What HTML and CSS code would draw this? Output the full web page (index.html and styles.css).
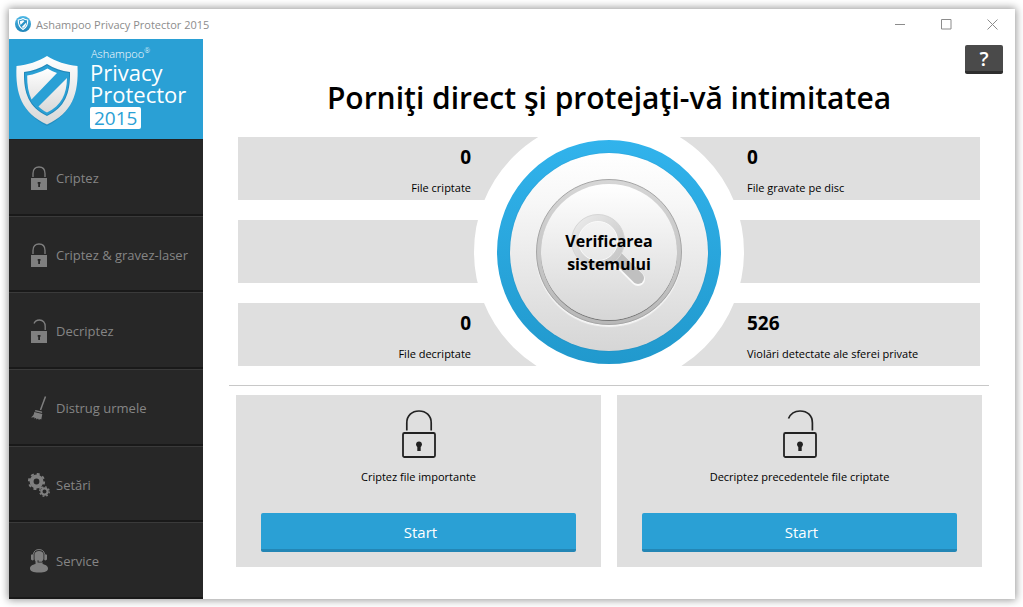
FILE: index.html
```html
<!DOCTYPE html>
<html lang="ro">
<head>
<meta charset="utf-8">
<title>Ashampoo Privacy Protector 2015</title>
<link rel="stylesheet" href="styles.css">
</head>
<body>
<svg class="defs" aria-hidden="true">
  <defs>
    <linearGradient id="silver" x1="0" y1="0" x2="0" y2="1"><stop offset="0" stop-color="#fff"/><stop offset="1" stop-color="#d8d8d8"/></linearGradient>
    <linearGradient id="sky" x1="0" y1="0" x2="0" y2="1"><stop offset="0" stop-color="#4fb8e6"/><stop offset="1" stop-color="#1d84b8"/></linearGradient>
    <linearGradient id="lens" x1="0" y1="0" x2="1" y2="1"><stop offset="0" stop-color="#ebebeb"/><stop offset="1" stop-color="#c4c4c4"/></linearGradient>
    <symbol id="lock-solid" viewBox="0 0 16 24"><path d="M2 11V7.500C2 3 4.500 1 8 1s6 2 6 6.500V11" fill="none" stroke="currentColor" stroke-width="1.300"/><path fill="currentColor" fill-rule="evenodd" d="M0 12h16v12H0zM6.700 16v1.800h.5V21h1.800v-3.200h.5V16z"/></symbol>
    <symbol id="unlock-solid" viewBox="0 0 16 24"><path d="M3 4.500C4 2 6 1 8.500 1c3.500 0 5.700 2.500 5.700 6.500V11" fill="none" stroke="currentColor" stroke-width="1.300"/><path fill="currentColor" fill-rule="evenodd" d="M0 12h16v12H0zM6.700 16v1.800h.5V21h1.800v-3.200h.5V16z"/></symbol>
    <symbol id="lock-body" viewBox="0 0 34 48"><rect x="1" y="23" width="32" height="24" rx="1.500" fill="none" stroke="currentColor" stroke-width="1.800"/><circle cx="17" cy="34.300" r="2.900" fill="currentColor"/><path d="M15.300 35h3.400v6h-3.400z" fill="currentColor"/></symbol>
  </defs>
</svg>
<div class="window">
  <header class="titlebar">
    <svg class="app-icon" viewBox="0 0 16 16" aria-hidden="true"><circle cx="8" cy="8" r="8" fill="url(#sky)"/><path d="M8 2.500c1.500 1 3 1.400 4.700 1.500.2 4.500-1.200 7.500-4.700 9.500C4.500 11.500 3.100 8.500 3.300 4 5 3.900 6.500 3.500 8 2.500z" fill="#2a93c6" stroke="#fff" stroke-width="1.100"/><path d="M4.800 5.300L8 4.300l1.500.7-4 4zM11.200 6.500c0 2.500-1 4.300-3.200 5.500l-1.200-.9z" fill="#fff"/></svg>
    <span class="title">Ashampoo Privacy Protector 2015</span>
    <button class="win-btn" aria-label="Minimizare"><svg viewBox="0 0 11 11"><path d="M0 5.500h10"/></svg></button>
    <button class="win-btn" aria-label="Maximizare"><svg viewBox="0 0 11 11"><path d="M.5.5h9.500v9.500H.5z"/></svg></button>
    <button class="win-btn" aria-label="Închidere"><svg viewBox="0 0 11 11"><path d="M.5.5l10 10M10.500.5l-10 10"/></svg></button>
  </header>
  <div class="content">
    <aside class="sidebar">
      <div class="logo">
        <svg class="shield" viewBox="0 0 64 70" aria-hidden="true"><path d="M32 2C23 7.500 14 10.500 3 11.500 1 39 8 58 32 70 56 58 63 39 61 11.500 50 10.500 41 7.500 32 2z" fill="#1c7fb0" opacity=".55"/><path d="M32 0C23 5.500 13 9 1.500 10 .2 38 7 57 32 68.500 57 57 63.800 38 62.500 10 51 9 41 5.500 32 0z" fill="url(#silver)"/><path d="M32 8C25 12.500 17.500 15 9 16c-.5 21 5 35.500 23 44 18-8.500 23.500-23 23-44-8.500-1-16-3.500-23-8z" fill="#2289bb"/><path d="M32 9.300C25 13.700 18 16 10 17c-.5 20 5 33.500 22 42 17-8.500 22.500-22 22-42-8-1-15-3.300-22-7.700z" fill="#2aa0d5"/><path d="M32.500 12.500c3 1.700 6 3.300 9.500 4.500L16.500 43.500C13.500 37 12 29 12.200 19.500c7.300-1.200 13.800-3.500 20.300-7zM52 22c-.3 16.500-5.500 27.500-20 34.500-3.500-1.700-6-3.700-8.500-6z" fill="url(#silver)"/></svg>
        <div class="brand">
          <span class="brand-small">Ashampoo<sup>®</sup></span>
          <span class="brand-name">Privacy<br>Protector</span>
          <span class="brand-year">2015</span>
        </div>
      </div>
      <nav class="nav">
        <button class="nav-item"><span class="nav-icon"><svg width="16" height="24"><use href="#lock-solid"/></svg></span>Criptez</button>
        <button class="nav-item"><span class="nav-icon"><svg width="16" height="24"><use href="#lock-solid"/></svg></span>Criptez &amp; gravez-laser</button>
        <button class="nav-item"><span class="nav-icon"><svg width="16" height="24"><use href="#unlock-solid"/></svg></span>Decriptez</button>
        <button class="nav-item"><span class="nav-icon"><svg width="16" height="24" viewBox="0 0 16 24"><path d="M14.500.5L9.500 14" fill="none" stroke="currentColor" stroke-width="1.500"/><path d="M4.500 14l6.500 1.500.2 1.500-7.500-1.800zM3.300 16l8 2-1 5.500-1.300-.5-1 1-1-1.500-1.500 1-.5-1.500-2 .5.500-1.200L0 21.500C2 20 3 18.500 3.300 16z" fill="currentColor"/></svg></span>Distrug urmele</button>
        <button class="nav-item"><span class="nav-icon"><svg width="22" height="24" viewBox="0 0 22 24"><g fill="none" stroke="currentColor"><circle cx="8.500" cy="8.500" r="4.900" stroke-width="4"/><circle cx="8.500" cy="8.500" r="7.600" stroke-width="2" stroke-dasharray="3 2.970"/><circle cx="16.500" cy="18.500" r="3.100" stroke-width="2.200"/><circle cx="16.500" cy="18.500" r="4.700" stroke-width="1.400" stroke-dasharray="1.850 1.840"/></g></svg></span>Setări</button>
        <button class="nav-item"><span class="nav-icon"><svg width="18" height="24" viewBox="0 0 18 24"><path d="M3.500 5C4 1.800 6 .6 9 .6s5 1.200 5.500 4.400" fill="none" stroke="currentColor" stroke-width="1"/><path d="M4.500 5C5 3 6.500 2 9 2s4 1 4.500 3v5c-.4 1.200-1 2-1.700 2.700H8.500v-1.500h-.9v2.200h5.200l-.3 1.600c3 .7 5.500 2 5.500 4.500 0 2.700-3 4-9 4s-9-1.300-9-4c0-2.500 2.500-3.800 5.500-4.500v-2.500c-.5-.7-.8-1.500-1-2.500zM1 5.800L3.700 5v6L2.500 11.500 1 10.500zM17 5.800L14.300 5v6l1.200.5 1.500-1z" fill="currentColor"/></svg></span>Service</button>
      </nav>
    </aside>
    <main class="main">
      <div class="toolbar"><button class="help" aria-label="Ajutor">?</button></div>
      <h1>Porniţi direct şi protejaţi-vă intimitatea</h1>
      <section class="stats">
        <div class="row">
          <div class="stat left"><strong>0</strong><span>File criptate</span></div>
          <div class="stat"><strong>0</strong><span>File gravate pe disc</span></div>
        </div>
        <div class="row"></div>
        <div class="row">
          <div class="stat left"><strong>0</strong><span>File decriptate</span></div>
          <div class="stat"><strong>526</strong><span>Violări detectate ale sferei private</span></div>
        </div>
        <button class="scan">
          <span class="disc"><span class="groove"><span class="face">
            <svg class="magnifier" viewBox="0 0 76 76" aria-hidden="true"><path d="M46 45L67 66" stroke="#fafafa" stroke-width="14" stroke-linecap="round"/><path d="M46 44L67 65" stroke="#c0c0c0" stroke-width="12" stroke-linecap="round"/><circle cx="27" cy="28" r="23" fill="none" stroke="url(#lens)" stroke-width="7"/><circle cx="27" cy="28" r="26.500" fill="none" stroke="#d6d6d6"/><circle cx="27" cy="28" r="19.500" fill="none" stroke="#fafafa"/></svg>
            <span class="scan-label">Verificarea<br>sistemului</span>
          </span></span></span>
        </button>
      </section>
      <hr>
      <section class="cards">
        <article class="card">
          <svg class="card-icon" viewBox="0 0 34 48" aria-hidden="true"><use href="#lock-body"/><path d="M4.800 20.500V13C4.800 5.500 10 1 17 1s12.200 4.500 12.200 12v7.500" fill="none" stroke="currentColor" stroke-width="1.700"/></svg>
          <p>Criptez file importante</p>
          <button class="start">Start</button>
        </article>
        <article class="card">
          <svg class="card-icon" viewBox="0 0 34 48" aria-hidden="true"><use href="#lock-body"/><path d="M5.500 8.500C7.500 4 12 1 17 1c7.500 0 12.400 4.500 12.400 12v7.500" fill="none" stroke="currentColor" stroke-width="1.700"/></svg>
          <p>Decriptez precedentele file criptate</p>
          <button class="start">Start</button>
        </article>
      </section>
    </main>
  </div>
</div>
</body>
</html>
```
FILE: styles.css
```css
* { box-sizing: border-box; }
body {
  margin: 0;
  padding: 9px 8px 8px 9px;
  min-height: 100vh;
  display: flex;
  background: #fff;
  color: #000;
  font-family: "Open Sans", "Noto Sans", sans-serif;
  font-size: 11px;
  font-feature-settings: "locl" 0;
}
button { font: inherit; font-feature-settings: inherit; color: inherit; border: 0; padding: 0; background: none; cursor: pointer; }
.defs { position: absolute; width: 0; height: 0; }

.window {
  flex: 1;
  display: flex;
  flex-direction: column;
  background: #fff;
  box-shadow: 0 0 8px 1px rgba(0, 0, 0, .42);
}
.titlebar { display: flex; align-items: center; height: 30px; padding-left: 6px; color: #8c8c8c; }
.app-icon { width: 16px; height: 16px; margin-right: 5px; }
.title { flex: 1; }
.win-btn { width: 46px; height: 30px; display: grid; place-items: center; }
.win-btn svg { width: 11px; height: 11px; fill: none; stroke: #8c8c8c; stroke-width: 1; }

.content { flex: 1; display: flex; }
.sidebar { width: 194px; flex: none; display: flex; flex-direction: column; background: #272727; }
.logo { height: 100px; display: flex; gap: 11px; padding: 8px 6px; background: #2aa0d5; color: #fff; }
.shield { width: 64px; height: 70px; margin-top: 9px; }
.brand { display: flex; flex-direction: column; align-items: flex-start; }
.brand-small { font-size: 11px; font-weight: 300; line-height: 14px; padding-left: 1px; }
.brand-small sup { font-size: 7px; line-height: 0; }
.brand-name { font-size: 22px; line-height: 22px; }
.brand-year { margin-top: 2px; padding: 0 4px; border-radius: 2px; background: #fff; color: #2aa0d5; font-size: 19px; line-height: 22px; }

.nav { flex: 1; display: flex; flex-direction: column; }
.nav-item {
  flex: 1;
  display: flex;
  align-items: center;
  padding: 2px 0 0 17px;
  border-top: 1px solid #3a3a3a;
  border-bottom: 2px solid #191919;
  color: #858585;
  font-size: 13px;
  white-space: nowrap;
}
.nav-item:first-child { border-top-color: #222; }
.nav-icon { width: 26px; margin-right: 4px; display: grid; place-items: center; color: #7f7f7f; }

.main { flex: 1; padding: 6px 12px 0; display: flex; flex-direction: column; }
.toolbar { display: flex; justify-content: flex-end; }
.help { width: 38px; height: 29px; padding-top: 2px; border-radius: 2px; border-bottom: 3px solid #2e2e2e; background: #4a4a4a; color: #fff; font-size: 20px; font-weight: 600; line-height: 24px; }
h1 { margin: 2px 0 17px; text-align: center; font-size: 30px; font-weight: 600; line-height: 44px; }

.stats { position: relative; overflow: hidden; display: grid; gap: 20px; margin: 0 23px; }
.row { display: grid; grid-template-columns: 1fr 1fr; height: 63px; background: #dfdfdf; }
.stat { display: flex; flex-direction: column; gap: 11px; padding: 8px 0 0 138px; line-height: 16px; }
.stat.left { padding: 8px 138px 0 0; text-align: right; }
.stat strong { font-size: 19px; line-height: 24px; }

.scan {
  position: absolute;
  left: 50%;
  top: 50%;
  transform: translate(-50%, -50%);
  width: 270px;
  height: 270px;
  padding: 13px;
  border: 23px solid #fff;
  border-radius: 50%;
  background: linear-gradient(#31b3ec, #2199cd);
}
.disc, .groove, .face { display: grid; place-items: center; border-radius: 50%; width: 100%; height: 100%; }
.disc { padding: 26px; background: linear-gradient(#fff, #f7f7f7 25%, #d6d6d6); box-shadow: 0 0 1px rgba(0, 70, 110, .4); }
.groove { padding: 4px; background: linear-gradient(#d6d6d6, #b8b8b8); border: 1px solid #a5a5a5; box-shadow: 0 2px 1px #f5f5f5; }
.face { position: relative; background: linear-gradient(#fff, #d6d6d6); box-shadow: 0 1px 0 #777; }
.magnifier { position: absolute; left: 30px; top: 29px; width: 76px; height: 76px; fill: none; }
.scan-label { position: relative; padding-top: 2px; font-size: 16px; font-weight: 700; line-height: 23px; }

hr { width: auto; margin: 19px 14px 9px; border: 0; border-top: 1px solid #c8c8c8; }
.cards { display: grid; grid-template-columns: 1fr 1fr; gap: 16px; margin: 0 21px 32px; }
.card { display: flex; flex-direction: column; align-items: center; padding: 15px 25px; background: #dfdfdf; }
.card-icon { width: 34px; height: 48px; color: #222; }
.card p { margin: 10px 0 28px; line-height: 17px; }
.start { width: 100%; height: 39px; padding: 2px 0 0 4px; border-radius: 2px; border-bottom: 3px solid #2386b5; background: #2aa0d5; color: #fff; font-size: 15px; }
```
